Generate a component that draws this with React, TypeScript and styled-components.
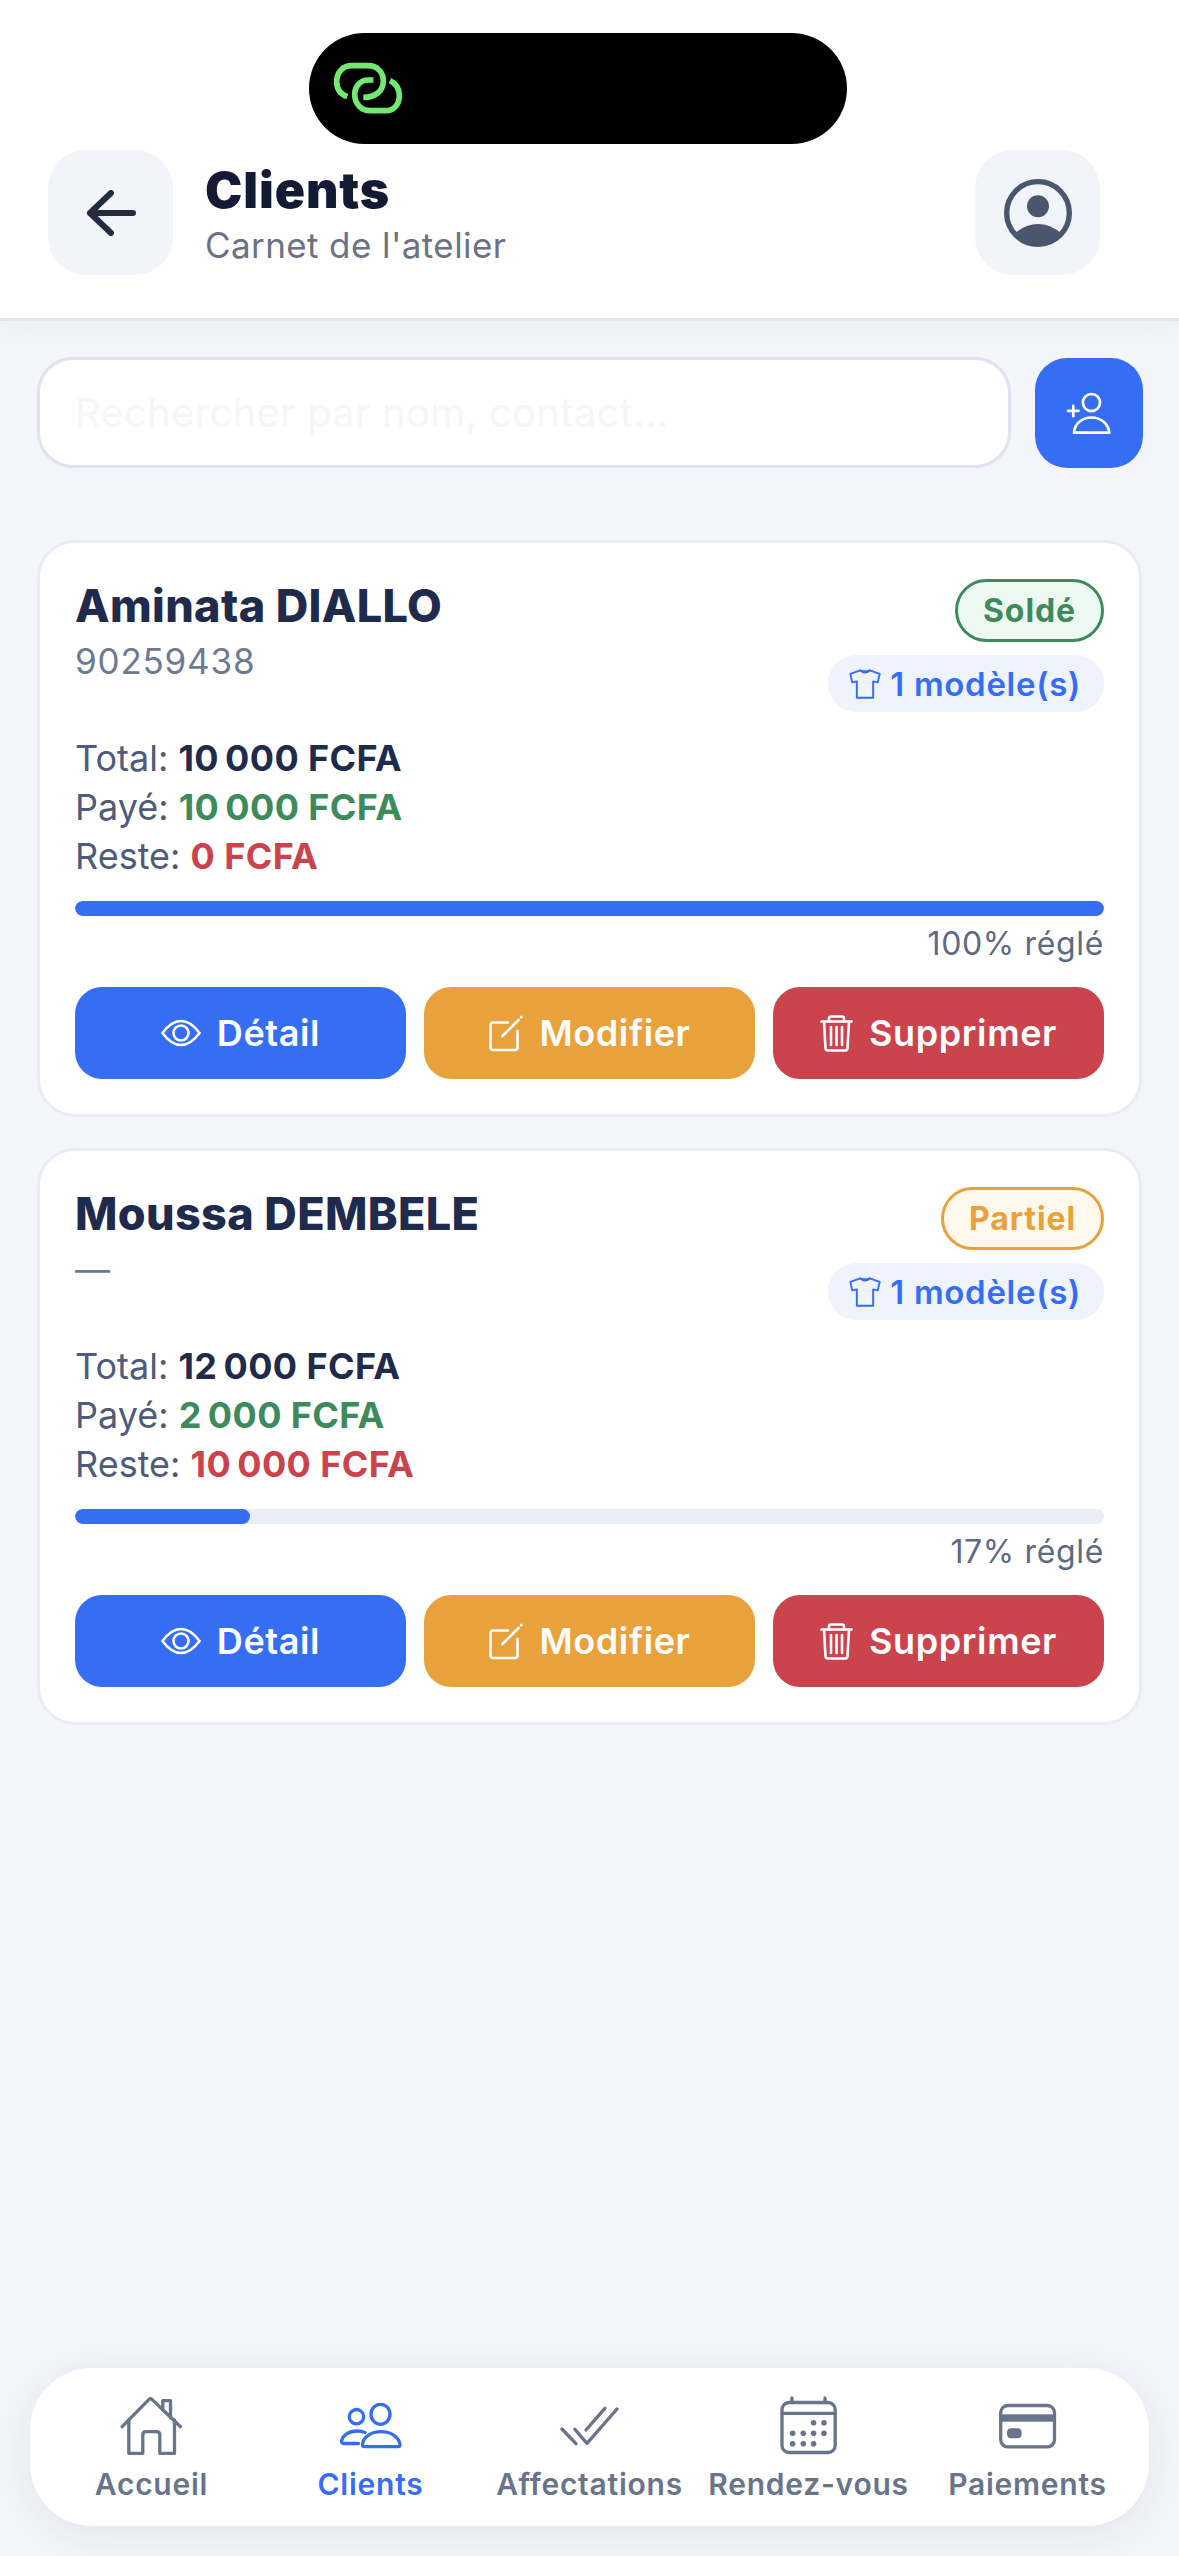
import { FC } from 'react'
import styled, { createGlobalStyle } from 'styled-components'

const BLUE = '#356ef5'
const NAVY = '#1f2b4d'
const GREEN = '#3d8b5a'
const RED = '#cb434c'
const ORANGE = '#e9a23b'

type clientType = {
  name: string
  phone: string
  total: string
  paid: string
  rest: string
  percent: number
  status: 'Soldé' | 'Partiel'
}

const clients: clientType[] = [
  {
    name: 'Aminata DIALLO',
    phone: '90259438',
    total: '10\u202f000 FCFA',
    paid: '10\u202f000 FCFA',
    rest: '0 FCFA',
    percent: 100,
    status: 'Soldé',
  },
  {
    name: 'Moussa DEMBELE',
    phone: '—',
    total: '12\u202f000 FCFA',
    paid: '2\u202f000 FCFA',
    rest: '10\u202f000 FCFA',
    percent: 17,
    status: 'Partiel',
  },
]

const LinkLogo = () => (
  <SLogo viewBox="0 0 300 240" width="100" height="80" fill="none" stroke="#72ea72" strokeWidth="17">
    <path d="M82 140 C60 132 50 115 50 95 C50 65 70 47 95 47 H145 C172 47 190 68 190 92 C190 122 168 142 130 142" />
    <path d="M160 90 H145 C120 90 104 110 104 133 C104 163 125 182 150 182 H198 C222 182 238 162 238 138 C238 116 228 100 210 92" />
  </SLogo>
)

const BackIcon = () => (
  <svg viewBox="0 0 50 46" width="50" height="46" fill="none" stroke="#232c3f" strokeWidth="6" strokeLinecap="round" strokeLinejoin="round">
    <path d="M47 23 H4 M25 3 L4 23 L25 43" />
  </svg>
)

const ProfileIcon = () => (
  <svg viewBox="0 0 216 216" width="72" height="72">
    <circle cx="108" cy="108" r="94" fill="none" stroke="#4a566b" strokeWidth="16" />
    <circle cx="108" cy="88" r="33" fill="#4a566b" />
    <path d="M38 170 C60 150 85 141 108 141 C131 141 156 150 178 170 A94 94 0 0 1 38 170 Z" fill="#4a566b" />
  </svg>
)

const AddClientIcon = () => (
  <svg viewBox="225 695 145 130" width="48" height="43" fill="none" stroke="#fff" strokeWidth="8" strokeLinecap="round" strokeLinejoin="round">
    <circle cx="305" cy="727" r="26" />
    <path d="M252 818 C254 792 276 772 305 772 C334 772 356 792 359 818 Z" />
    <path d="M234 752 H266 M250 737 V768" />
  </svg>
)

const ShirtIcon = () => (
  <svg viewBox="0 0 96 92" width="32" height="30" fill="none" stroke={BLUE} strokeWidth="6" strokeLinejoin="round">
    <path d="M33 4 L3 15 L9 41 L23 38 V88 H73 V38 L87 41 L93 15 L63 4 Q48 18 33 4 Z" />
    <path d="M33 4 Q48 10 63 4" />
  </svg>
)

const EyeIcon = () => (
  <svg viewBox="0 0 40 28" width="40" height="28" fill="none" stroke="#fff" strokeWidth="2.6">
    <path d="M1.5 14 C8 5 14 2 20 2 C26 2 32 5 38.5 14 C32 23 26 26 20 26 C14 26 8 23 1.5 14 Z" />
    <circle cx="20" cy="14" r="7.5" />
  </svg>
)

const EditIcon = () => (
  <svg viewBox="0 0 35 37" width="35" height="37" fill="none" stroke="#fff" strokeWidth="2.6" strokeLinecap="round">
    <path d="M20 7.5 H5 Q2.5 7.5 2.5 10 V32.5 Q2.5 35 5 35 H27 Q29.5 35 29.5 32.5 V16" />
    <path d="M14.5 21 L30.5 5 M33 2.3 L33.3 2" />
  </svg>
)

const TrashIcon = () => (
  <svg viewBox="0 0 33 37" width="33" height="37" fill="none" stroke="#fff" strokeWidth="2.6" strokeLinecap="round" strokeLinejoin="round">
    <path d="M1.5 6.5 H31.5" />
    <path d="M9 6.5 V3.5 Q9 1.5 11 1.5 H22 Q24 1.5 24 3.5 V6.5" />
    <path d="M4 6.5 L5.5 33 Q5.5 35.5 8 35.5 H25 Q27.5 35.5 27.5 33 L29 6.5" />
    <path d="M11 12 V30 M16.5 12 V30 M22 12 V30" />
  </svg>
)

const HomeIcon = () => (
  <NavSvg>
    <path d="M3.2 30.7 L29.8 3.6 Q31.5 2 33.2 3.6 L61.5 30.7" />
    <path d="M43.8 14 V4.7 H51.5 V22" />
    <path d="M9.8 24 V57.3 H23.8 V39 Q23.8 35.7 26.8 35.7 H37.8 Q40.8 35.7 40.8 39 V57.3 H55.5 V24" />
  </NavSvg>
)

const ClientsIcon = () => (
  <NavSvg>
    <ellipse cx="42.5" cy="18.3" rx="9.5" ry="10" />
    <circle cx="18.5" cy="20.7" r="7.2" />
    <path d="M24.5 48.5 C25 41 33 35.7 43 35.7 C53 35.7 61 41 62 48.5 Q62 50.7 60 50.7 H26.5 Q24.5 50.7 24.5 48.5 Z" />
    <path d="M27 36.5 C25 35.5 22 35 19 35 C11 35 4.5 39.5 3.5 45 Q3.5 47.5 6 47.5 H20.5" />
  </NavSvg>
)

const ChecksIcon = () => (
  <NavSvg>
    <path d="M4.9 33 L19 47.7" />
    <path d="M17.9 33.3 L30 47.3 L60 13" />
    <path d="M29 34 L47.9 12.3" />
  </NavSvg>
)

const calendarDots = [
  [37.6, 26.7],
  [48, 26.7],
  [16.6, 37.3],
  [27.3, 37.3],
  [37.6, 37.3],
  [48, 37.3],
  [16.6, 47.7],
  [27.3, 47.7],
  [37.6, 47.7],
]

const CalendarIcon = () => (
  <NavSvg>
    <rect x="6" y="6.5" width="53.2" height="50" rx="7" />
    <path d="M6 17.3 H59.2 M15.9 2 V6.5 M49 2 V6.5" />
    {calendarDots.map(([cx, cy]) => (
      <circle key={`${cx}-${cy}`} cx={cx} cy={cy} r="2.8" fill="currentColor" stroke="none" />
    ))}
  </NavSvg>
)

const CardIcon = () => (
  <NavSvg>
    <rect x="5.7" y="9.5" width="53.8" height="41.3" rx="7" />
    <rect x="5.7" y="18.3" width="53.8" height="7.4" fill="currentColor" stroke="none" />
    <rect x="12.1" y="32.3" width="14.5" height="10" rx="4" fill="currentColor" stroke="none" />
  </NavSvg>
)

const navItems = [
  { label: 'Accueil', icon: <HomeIcon /> },
  { label: 'Clients', icon: <ClientsIcon />, active: true },
  { label: 'Affectations', icon: <ChecksIcon /> },
  { label: 'Rendez-vous', icon: <CalendarIcon /> },
  { label: 'Paiements', icon: <CardIcon /> },
]

const ClientCard: FC<{ client: clientType }> = ({ client }) => (
  <SCard>
    <STop>
      <div>
        <SName>{client.name}</SName>
        <SPhone>{client.phone}</SPhone>
      </div>
      <SBadges>
        <SStatus $done={client.status === 'Soldé'}>{client.status}</SStatus>
        <SModels>
          <ShirtIcon />
          1 modèle(s)
        </SModels>
      </SBadges>
    </STop>
    <SStats>
      <div>
        Total: <SAmount $color={NAVY}>{client.total}</SAmount>
      </div>
      <div>
        Payé: <SAmount $color={GREEN}>{client.paid}</SAmount>
      </div>
      <div>
        Reste: <SAmount $color={RED}>{client.rest}</SAmount>
      </div>
    </SStats>
    <STrack>
      <SFill style={{ width: `${client.percent}%` }} />
    </STrack>
    <SPercent>{client.percent}% réglé</SPercent>
    <SActions>
      <SAction $bg={BLUE}>
        <EyeIcon />
        Détail
      </SAction>
      <SAction $bg={ORANGE}>
        <EditIcon />
        Modifier
      </SAction>
      <SAction $bg={RED}>
        <TrashIcon />
        Supprimer
      </SAction>
    </SActions>
  </SCard>
)

export default function App() {
  return (
    <SPage>
      <GlobalStyle />
      <SHeader>
        <SIsland>
          <LinkLogo />
        </SIsland>
        <SHeaderRow>
          <SSquareButton>
            <BackIcon />
          </SSquareButton>
          <STitles>
            <STitle>Clients</STitle>
            <SSubtitle>Carnet de l'atelier</SSubtitle>
          </STitles>
          <SProfileButton>
            <ProfileIcon />
          </SProfileButton>
        </SHeaderRow>
      </SHeader>
      <SMain>
        <SSearchRow>
          <SSearch placeholder="Rechercher par nom, contact..." />
          <SAddButton>
            <AddClientIcon />
          </SAddButton>
        </SSearchRow>
        <SCardList>
          {clients.map((client) => (
            <ClientCard key={client.name} client={client} />
          ))}
        </SCardList>
      </SMain>
      <SNav>
        {navItems.map((item) => (
          <SNavItem key={item.label} $active={!!item.active}>
            {item.icon}
            <span>{item.label}</span>
          </SNavItem>
        ))}
      </SNav>
    </SPage>
  )
}

const GlobalStyle = createGlobalStyle`
  * {
    box-sizing: border-box;
  }
  body {
    margin: 0;
    font-family: Inter, "Liberation Sans", sans-serif;
    background: #f3f5fb;
  }
`

const SPage = styled.div`
  height: 2556px;
  display: flex;
  flex-direction: column;
  overflow: hidden;
  background: #f3f5fb;
`

const SHeader = styled.header`
  background: #fff;
  border-bottom: 3px solid #e4e6ec;
  box-shadow: 0 6px 30px rgba(30, 40, 80, 0.04);
  padding: 33px 79px 43px 48px;
`

const SIsland = styled.div`
  width: 538px;
  height: 111px;
  margin: 0 0 6px 261px;
  padding-left: 11px;
  display: flex;
  align-items: center;
  background: #000;
  border-radius: 56px;
`

const SLogo = styled.svg`
  margin-top: 3px;
`

const SHeaderRow = styled.div`
  display: flex;
  align-items: center;
  gap: 32px;
`

const SSquareButton = styled.button`
  width: 125px;
  height: 125px;
  flex: none;
  padding: 0;
  border: none;
  border-radius: 38px;
  background: #f1f4f9;
  display: flex;
  align-items: center;
  justify-content: center;
`

const SProfileButton = styled(SSquareButton)`
  margin-left: auto;
`

const STitles = styled.div`
  display: flex;
  flex-direction: column;
  margin-top: 1px;
`

const STitle = styled.div`
  font-size: 50px;
  line-height: 60px;
  font-weight: 900;
  letter-spacing: 0.9px;
  color: #141a33;
`

const SSubtitle = styled.div`
  margin-top: 3px;
  font-size: 35px;
  line-height: 44px;
  letter-spacing: 0.4px;
  color: #6b7285;
`

const SMain = styled.main`
  flex: 1;
  padding: 36px 37px 0;
`

const SSearchRow = styled.div`
  margin-right: -1px;
  display: flex;
  align-items: flex-end;
  gap: 24px;
`

const SSearch = styled.input`
  flex: 1;
  height: 111px;
  padding: 0 35px;
  border: 3px solid #dfe3ef;
  border-radius: 36px;
  background: #fff;
  font-family: inherit;
  font-size: 40px;
  letter-spacing: 0.3px;
  &::placeholder {
    color: #f5f6f8;
    opacity: 1;
  }
`

const SAddButton = styled.button`
  width: 108px;
  height: 110px;
  flex: none;
  padding: 0;
  border: none;
  border-radius: 32px;
  background: ${BLUE};
  display: flex;
  align-items: center;
  justify-content: center;
`

const SCardList = styled.div`
  margin-top: 72px;
  display: flex;
  flex-direction: column;
  gap: 31px;
`

const SCard = styled.article`
  height: 577px;
  padding: 36px 35px 35px;
  background: #fff;
  border: 3px solid #e8edf5;
  border-radius: 38px;
`

const STop = styled.div`
  display: flex;
  justify-content: space-between;
  align-items: flex-start;
`

const SName = styled.div`
  font-size: 45px;
  line-height: 54px;
  font-weight: 800;
  letter-spacing: 0.35px;
  color: ${NAVY};
`

const SPhone = styled.div`
  margin-top: 8px;
  font-size: 35px;
  line-height: 40px;
  letter-spacing: 0.8px;
  color: #6c7a94;
`

const SBadges = styled.div`
  display: flex;
  flex-direction: column;
  align-items: flex-end;
  gap: 13px;
`

const SStatus = styled.div<{ $done: boolean }>`
  height: 63px;
  padding: 0 25px;
  display: flex;
  align-items: center;
  border-radius: 32px;
  border: 3px solid ${(p) => (p.$done ? GREEN : ORANGE)};
  background: ${(p) => (p.$done ? '#eef9f1' : '#fff8ec')};
  color: ${(p) => (p.$done ? GREEN : ORANGE)};
  font-size: 32px;
  font-weight: 700;
  letter-spacing: 0.9px;
`

const SModels = styled.div`
  height: 57px;
  padding: 0 23px 0 21px;
  display: flex;
  align-items: center;
  gap: 9px;
  border-radius: 29px;
  background: #eef3fe;
  color: ${BLUE};
  font-size: 33px;
  font-weight: 600;
  letter-spacing: 0.7px;
`

const SStats = styled.div`
  margin-top: 22px;
  font-size: 36px;
  line-height: 49px;
  color: #4d5b7c;
`

const SAmount = styled.strong<{ $color: string }>`
  font-weight: 700;
  letter-spacing: 0.4px;
  color: ${(p) => p.$color};
`

const STrack = styled.div`
  margin-top: 20px;
  height: 15px;
  border-radius: 8px;
  background: #e9edf6;
  overflow: hidden;
`

const SFill = styled.div`
  height: 100%;
  border-radius: 8px;
  background: ${BLUE};
`

const SPercent = styled.div`
  margin-top: 8px;
  text-align: right;
  font-size: 32px;
  line-height: 40px;
  letter-spacing: 0.65px;
  color: #5d6a86;
`

const SActions = styled.div`
  margin-top: 23px;
  display: grid;
  grid-template-columns: repeat(3, 1fr);
  gap: 18px;
`

const SAction = styled.button<{ $bg: string }>`
  height: 92px;
  padding: 0;
  border: none;
  border-radius: 27px;
  background: ${(p) => p.$bg};
  color: #fff;
  font-family: inherit;
  font-size: 36px;
  font-weight: 600;
  letter-spacing: 0.6px;
  display: flex;
  align-items: center;
  justify-content: center;
  gap: 16px;
`

const SNav = styled.nav`
  margin: 0 30px 30px;
  height: 158px;
  padding: 0 12px;
  display: grid;
  grid-template-columns: repeat(5, 1fr);
  background: #fff;
  border-radius: 62px;
  box-shadow: 0 8px 40px rgba(30, 40, 80, 0.08);
`

const SNavItem = styled.div<{ $active: boolean }>`
  padding-top: 28px;
  display: flex;
  flex-direction: column;
  align-items: center;
  gap: 9.5px;
  color: ${(p) => (p.$active ? BLUE : '#67748b')};
  font-size: 30px;
  line-height: 36px;
  font-weight: 600;
  letter-spacing: 0.75px;
  white-space: nowrap;
`

const NavSvg: FC<{ children: React.ReactNode }> = ({ children }) => (
  <svg
    viewBox="0 0 66 60"
    width="66"
    height="60"
    fill="none"
    stroke="currentColor"
    strokeWidth="3.3"
    strokeLinecap="round"
    strokeLinejoin="round"
  >
    {children}
  </svg>
)
